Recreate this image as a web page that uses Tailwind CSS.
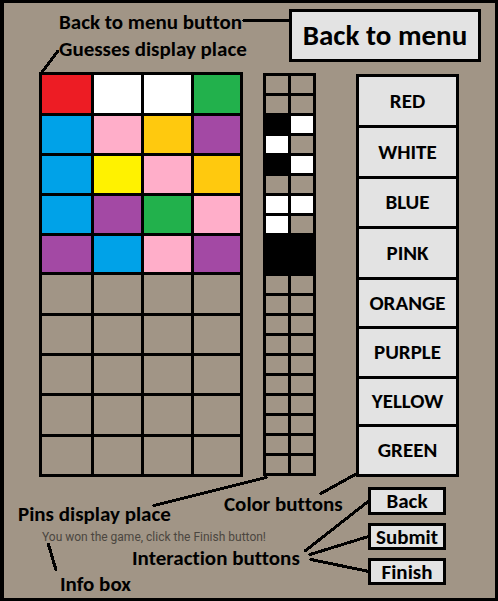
<!DOCTYPE html>
<html lang="en">
<head>
<meta charset="utf-8">
<meta name="viewport" content="width=device-width, initial-scale=1">
<title>Mastermind game screen</title>
<script src="https://cdn.jsdelivr.net/npm/@tailwindcss/browser@4"></script>
</head>
<body class="font-['Carlito','Lato',sans-serif] font-bold text-black [font-variant-ligatures:none]">
<main class="relative min-h-screen border-y-3 border-r-3 border-l-4 border-black bg-[#a19586] text-[21px] leading-[27px]">
  <header class="flex gap-[45px] pt-[6px] pl-[55px]">
    <div class="w-[185px] whitespace-nowrap">
      <p>Back to menu button</p>
      <p>Guesses display place</p>
    </div>
    <button type="button" class="h-[53px] w-[192px] whitespace-nowrap border-3 border-black bg-[#e3e3e3] text-[29px]">Back to menu</button>
  </header>

  <div class="flex items-start pt-[9px] pl-[35px]">
    <section id="guesses" aria-label="Guesses" class="grid grid-cols-[49px_47px_47px_46px] grid-rows-[38px_37px_37px_37px_36px_38px_37px_37px_38px_37px] gap-[3px] bg-black p-[3px]"></section>
    <section id="pins" aria-label="Pins" class="mt-px ml-5 grid auto-rows-[17px] grid-cols-[22px_22px] gap-[3px] bg-black p-[3px]"></section>
    <section aria-label="Colors" class="mt-[2px] ml-10 grid w-[103px] grid-rows-[48px_48px_47px_48px_46px_47px_45px_47px] gap-[3px] bg-black p-[3px]">
      <button type="button" class="bg-[#e3e3e3]">RED</button>
      <button type="button" class="bg-[#e3e3e3]">WHITE</button>
      <button type="button" class="bg-[#e3e3e3]">BLUE</button>
      <button type="button" class="bg-[#e3e3e3]">PINK</button>
      <button type="button" class="bg-[#e3e3e3]">ORANGE</button>
      <button type="button" class="bg-[#e3e3e3]">PURPLE</button>
      <button type="button" class="bg-[#e3e3e3]">YELLOW</button>
      <button type="button" class="bg-[#e3e3e3]">GREEN</button>
    </section>
  </div>

  <footer class="flex pt-[10px]">
    <div class="w-[364px] whitespace-nowrap">
      <div class="flex items-start gap-[54px] pl-[14px]">
        <p class="w-[152px] pt-[14px]">Pins display place</p>
        <p class="pt-[4px]">Color buttons</p>
      </div>
      <p role="status" class="pl-[38px] font-[Roboto,sans-serif] text-[12px] leading-[18px] font-normal text-[#4b4640]">You won the game, click the Finish button!</p>
      <p class="pl-[128px] leading-[25px]">Interaction buttons</p>
      <p class="pl-[56px]">Info box</p>
    </div>
    <div class="flex w-[78px] flex-col gap-[8px] leading-[22px]">
      <button type="button" class="h-[28px] border-3 border-black bg-[#e3e3e3]">Back</button>
      <button type="button" class="h-[27px] border-3 border-black bg-[#e3e3e3]">Submit</button>
      <button type="button" class="h-[27px] border-3 border-black bg-[#e3e3e3]">Finish</button>
    </div>
  </footer>

  <!-- Callout lines between the captions and the parts they name -->
  <svg class="pointer-events-none absolute -top-[3px] -left-[4px]" width="498" height="601" viewBox="0 0 498 601" fill="none" stroke="#000" stroke-width="3" stroke-linecap="round" shape-rendering="crispEdges" aria-hidden="true">
    <path d="M244 20.500H290M58 51L42 72M154 505.500L266 477.500M321 493.500L356 474M305 551L370 500M310 554.500L370 536M311 559.500L369 571.500M48.500 544.500L56 570"/>
  </svg>
</main>
<script>
  const fills = {
    r: "bg-[#ed1c24]", w: "bg-white", g: "bg-[#22b14c]", b: "bg-[#00a2e8]",
    p: "bg-[#ffaec9]", o: "bg-[#ffc90e]", v: "bg-[#a349a4]", y: "bg-[#fff200]",
    k: "bg-black", "-": "bg-[#a19586]"
  };
  function fill(id, cells) {
    document.getElementById(id).innerHTML =
      [...cells].map(c => `<div class="${fills[c]}"></div>`).join("");
  }
  fill("guesses", "rwwg" + "bpov" + "bypo" + "bvgp" + "vbpv" + "-".repeat(20));
  fill("pins", "----" + "kw" + "w-" + "kw" + "--" + "ww" + "w-" + "kkkk" + "-".repeat(20));
</script>
</body>
</html>
